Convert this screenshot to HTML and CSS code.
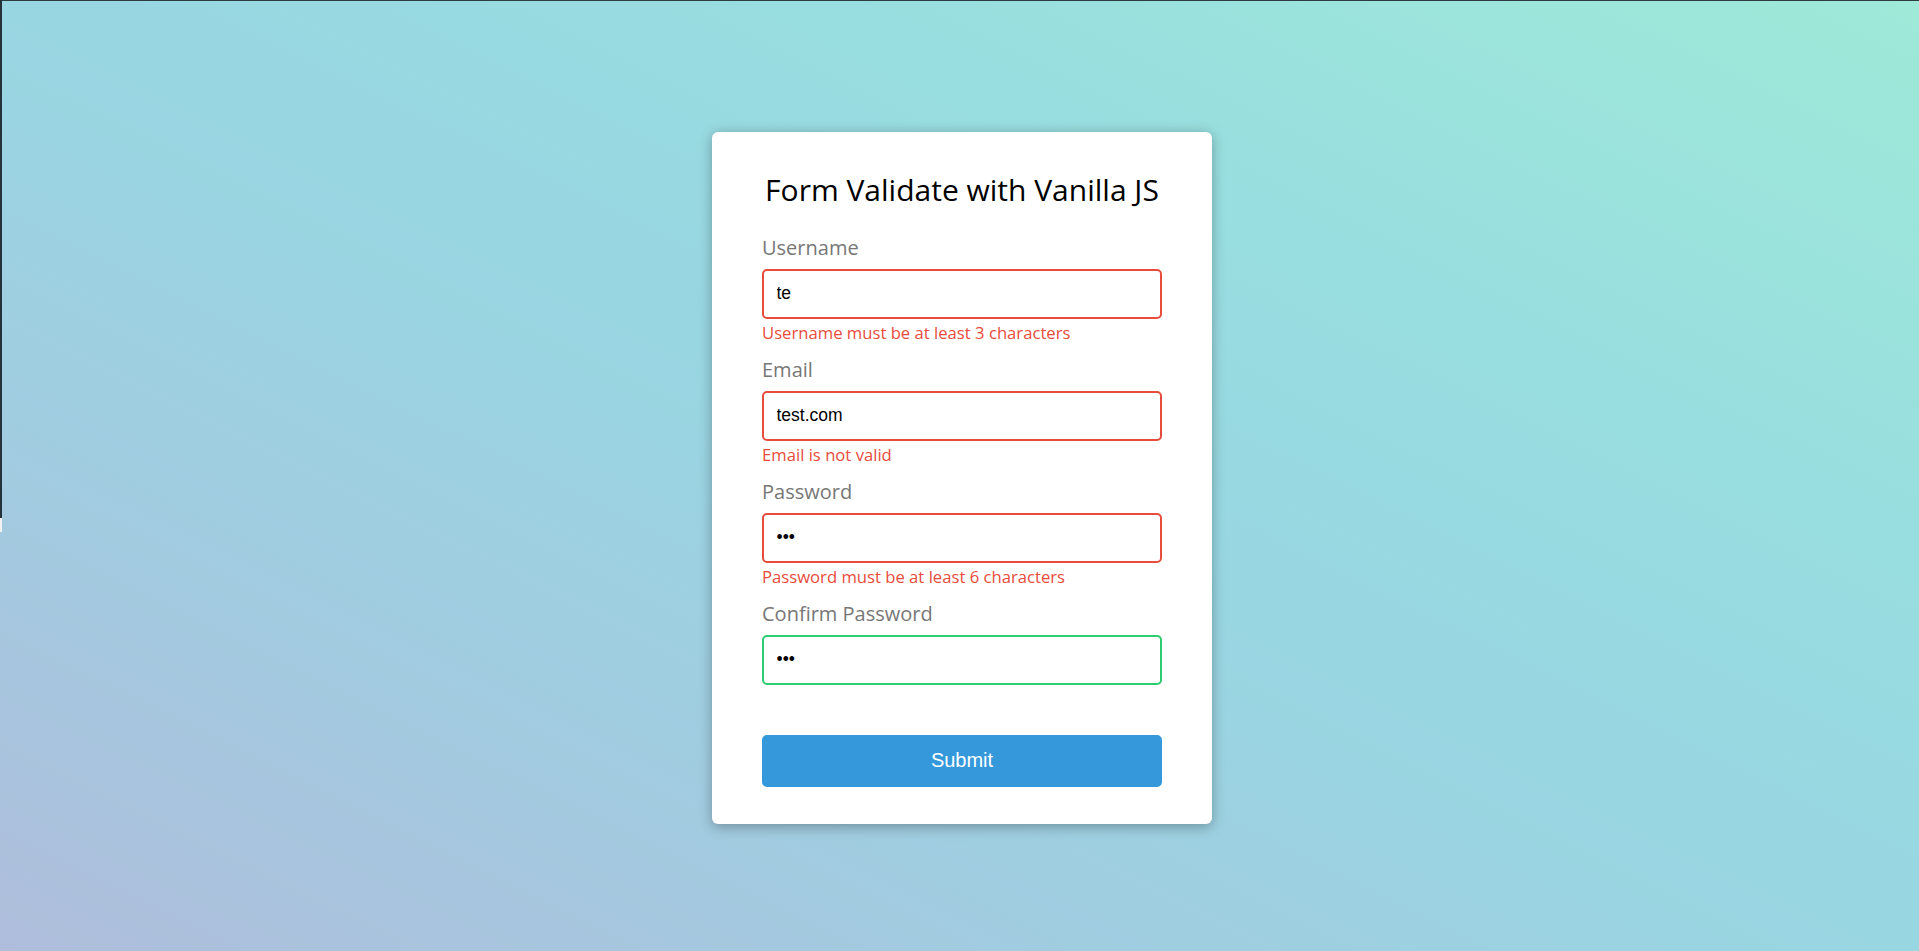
FILE: index.html
```html
<!DOCTYPE html>
<html lang="en">
<head>
<meta charset="UTF-8">
<title>Form Validator</title>
<link rel="stylesheet" href="styles.css">
</head>
<body>
<div class="edge-top"></div>
<div class="edge-left"></div>
<div class="container">
  <form class="form" id="form" onsubmit="return false">
    <h2>Form Validate with Vanilla JS</h2>
    <div class="form-control error">
      <label for="username">Username</label>
      <input type="text" id="username" value="te" placeholder="Enter username">
      <small>Username must be at least 3 characters</small>
    </div>
    <div class="form-control error">
      <label for="email">Email</label>
      <input type="text" id="email" value="test.com" placeholder="Enter email">
      <small>Email is not valid</small>
    </div>
    <div class="form-control error">
      <label for="password">Password</label>
      <input type="password" id="password" value="abc" placeholder="Enter password">
      <small>Password must be at least 6 characters</small>
    </div>
    <div class="form-control success">
      <label for="password2">Confirm Password</label>
      <input type="password" id="password2" value="abc" placeholder="Enter password again">
      <small>Error message</small>
    </div>
    <button type="submit">Submit</button>
  </form>
</div>
</body>
</html>
```

FILE: styles.css
```css
* {
  box-sizing: border-box;
}

html, body {
  height: 100%;
}

body {
  margin: 0;
  padding: 5px 0 0 5px;
  min-height: 100vh;
  display: flex;
  align-items: center;
  justify-content: center;
  font-family: "Open Sans", "Noto Sans", sans-serif;
  background: linear-gradient(to top right, #afbddb 0%, #a2cbe0 25%, #98d6e2 50%, #98dde0 70%, #9ee9d8 100%);
  overflow: hidden;
}

.edge-top {
  position: fixed;
  top: 0;
  left: 0;
  right: 0;
  height: 1px;
  background: #2f3b42;
}

.edge-left {
  position: fixed;
  top: 0;
  left: 0;
  width: 2px;
  height: 518px;
  background: #25323a;
}

.edge-left::after {
  content: "";
  position: absolute;
  top: 518px;
  left: 0;
  width: 2px;
  height: 14px;
  background: #f2f2f2;
}

.container {
  background-color: #fff;
  border-radius: 6px;
  box-shadow: 0 2.5px 12.5px rgba(0, 0, 0, 0.3);
  width: 500px;
}

.form {
  padding: 37.5px 50px;
}

h2 {
  text-align: center;
  margin: 0 0 24px;
  font-size: 30px;
  font-weight: 400;
  color: #000;
}

.form-control {
  margin-bottom: 12.5px;
  padding-bottom: 25px;
  position: relative;
}

.form-control label {
  color: #777;
  display: block;
  margin-bottom: 7.5px;
  font-size: 20px;
}

.form-control input {
  border: 2.5px solid #f0f0f0;
  border-radius: 5px;
  display: block;
  width: 100%;
  padding: 12.5px;
  font-size: 17.5px;
  font-family: "Liberation Sans", Arial, sans-serif;
  color: #000;
  outline: none;
}

.form-control.success input {
  border-color: #2ecc71;
}

.form-control.error input {
  border-color: #e74c3c;
}

.form-control small {
  color: #e74c3c;
  position: absolute;
  bottom: 0;
  left: 0;
  font-size: 16.67px;
  visibility: hidden;
}

.form-control.error small {
  visibility: visible;
}

.form button {
  cursor: pointer;
  background-color: #3498db;
  border: 2.5px solid #3498db;
  border-radius: 5px;
  color: #fff;
  display: block;
  font-size: 20px;
  font-family: "Liberation Sans", Arial, sans-serif;
  padding: 12.5px;
  margin-top: 25px;
  width: 100%;
}
```
